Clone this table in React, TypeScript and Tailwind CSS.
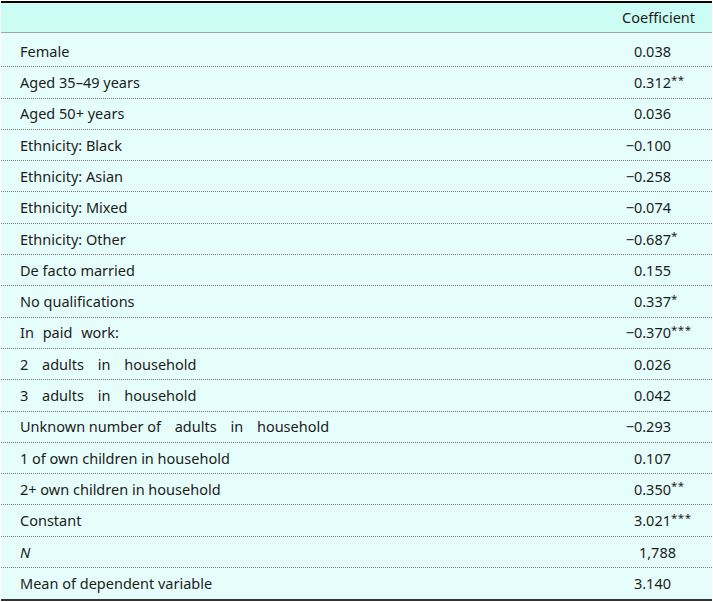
import React from "react";

type Row = { label: React.ReactNode; num: string; stars?: string; shift?: string };

const wide = (pre: string, rest: string) => (
  <>
    {pre}
    <span className="[word-spacing:10px]">{rest}</span>
  </>
);

const rows: Row[] = [
  { label: "Female", num: "0.038" },
  { label: "Aged 35–49 years", num: "0.312", stars: "**" },
  { label: "Aged 50+ years", num: "0.036" },
  { label: "Ethnicity: Black", num: "−0.100" },
  { label: "Ethnicity: Asian", num: "−0.258" },
  { label: "Ethnicity: Mixed", num: "−0.074" },
  { label: "Ethnicity: Other", num: "−0.687", stars: "*" },
  { label: "De facto married", num: "0.155" },
  { label: "No qualifications", num: "0.337", stars: "*" },
  { label: <span className="[word-spacing:5px]">In paid work:</span>, num: "−0.370", stars: "***" },
  { label: wide("2", " adults in household"), num: "0.026" },
  { label: wide("3", " adults in household"), num: "0.042" },
  { label: wide("Unknown number of", " adults in household"), num: "−0.293" },
  { label: "1 of own children in household", num: "0.107" },
  { label: "2+ own children in household", num: "0.350", stars: "**" },
  { label: "Constant", num: "3.021", stars: "***" },
  { label: <span className="italic">N</span>, num: "1,788", shift: "translate-x-[5px]" },
  { label: "Mean of dependent variable", num: "3.140" },
];

export default function App() {
  return (
    <div className="w-[713px] h-[602px] bg-white" style={{ fontFamily: '"Noto Sans", "Open Sans", sans-serif' }}>
      <div className="mx-[1px] mt-[1px] w-[711px] border-t-2 border-black">
        <div className="h-[30px] bg-[#ccfdf4] border-b border-[#a3a3a3] flex items-center justify-end pr-[17px] text-[14.5px] text-[#1c1c1c]">
          Coefficient
        </div>
        <div className="bg-[#e6fefb] pt-[3px] border-b-2 border-[#333]">
          {rows.map((r, i) => (
            <div
              key={i}
              className={
                "h-[31.3px] flex items-center text-[14.5px] text-[#1c1c1c] " +
                (i < rows.length - 1 ? "border-b border-dotted border-[#7a7a7a]" : "")
              }
            >
              <div className="flex-1 pl-[19px] pt-[1px] whitespace-nowrap">{r.label}</div>
              <div className="w-[200px] pt-[1px] flex justify-end">
                <span className={"whitespace-nowrap " + (r.shift ?? "")}>{r.num}</span>
              </div>
              <div className="w-[41px] whitespace-nowrap">
                {r.stars ? (
                  <span className="relative -top-[4px] text-[11.5px] tracking-[0.5px]">{r.stars}</span>
                ) : null}
              </div>
            </div>
          ))}
        </div>
      </div>
    </div>
  );
}
